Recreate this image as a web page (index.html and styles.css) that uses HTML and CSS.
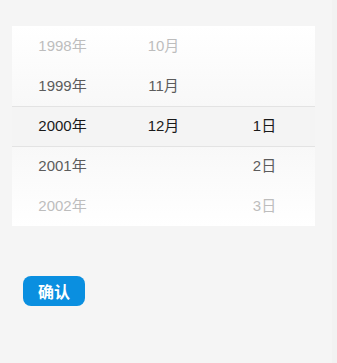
FILE: index.html
```html
<!DOCTYPE html>
<html lang="zh-CN">
<head>
    <meta charset="UTF-8">
    <meta name="viewport" content="width=device-width, initial-scale=1.0">
    <title>日期选择</title>
    <link rel="stylesheet" href="styles.css">
</head>
<body>
    <div class="page">
        <!-- 日期选择器 -->
        <div class="picker">
            <div class="picker-indicator"></div>
            <div class="picker-col">
                <div class="item far">1998年</div>
                <div class="item near">1999年</div>
                <div class="item selected">2000年</div>
                <div class="item near">2001年</div>
                <div class="item far">2002年</div>
            </div>
            <div class="picker-col">
                <div class="item far">10月</div>
                <div class="item near">11月</div>
                <div class="item selected">12月</div>
                <div class="item"></div>
                <div class="item"></div>
            </div>
            <div class="picker-col">
                <div class="item"></div>
                <div class="item"></div>
                <div class="item selected">1日</div>
                <div class="item near">2日</div>
                <div class="item far">3日</div>
            </div>
        </div>

        <button class="confirm-btn">确认</button>
    </div>
</body>
</html>
```

FILE: styles.css
```css
/* 基础样式 */
html {
    background-color: #f2f2f2;
}

body {
    margin: 0;
    padding: 0;
    font-family: "Liberation Sans", Arial, "Noto Sans CJK SC", sans-serif;
}

.page {
    width: 332px;
    height: 363px;
    background-color: #f5f5f5;
    padding: 26px 0 0 12px;
    box-sizing: border-box;
}

/* 选择器 */
.picker {
    position: relative;
    display: flex;
    width: 303px;
    height: 200px;
    background: linear-gradient(to bottom, #ffffff 0%, #f8f8f8 40%, #f5f5f5 50%, #f8f8f8 60%, #ffffff 100%);
}

.picker-indicator {
    position: absolute;
    left: 0;
    right: 0;
    top: 80px;
    height: 39px;
    border-top: 1px solid #e3e3e3;
    border-bottom: 1px solid #e3e3e3;
    background-color: #f4f4f4;
}

.picker-col {
    position: relative;
    flex: 1;
    display: flex;
    flex-direction: column;
}

.item {
    height: 40px;
    line-height: 40px;
    text-align: center;
    font-size: 15px;
    color: #222;
}

.item.near {
    color: #5c5c5c;
}

.item.far {
    color: #bdbdbd;
}

.item.selected {
    color: #1a1a1a;
}

/* 确认按钮 */
.confirm-btn {
    display: block;
    margin: 50px 0 0 11px;
    width: 62px;
    height: 30px;
    padding: 0;
    border: none;
    border-radius: 8px;
    background-color: #0a8fe0;
    color: #fff;
    font-family: "Noto Sans CJK SC", sans-serif;
    font-size: 16px;
    font-weight: bold;
    cursor: pointer;
}
```
